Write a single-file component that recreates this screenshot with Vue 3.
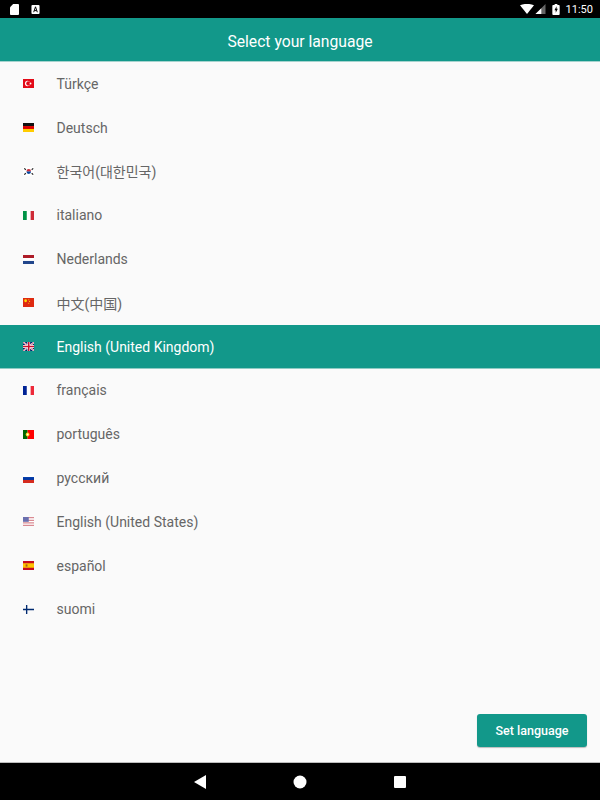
<script setup>
const languages = [
  { name: 'Türkçe', flag: 'tr' },
  { name: 'Deutsch', flag: 'de' },
  { name: '한국어(대한민국)', flag: 'kr' },
  { name: 'italiano', flag: 'it' },
  { name: 'Nederlands', flag: 'nl' },
  { name: '中文(中国)', flag: 'cn' },
  { name: 'English (United Kingdom)', flag: 'gb', selected: true },
  { name: 'français', flag: 'fr' },
  { name: 'português', flag: 'pt' },
  { name: 'русский', flag: 'ru' },
  { name: 'English (United States)', flag: 'us' },
  { name: 'español', flag: 'es' },
  { name: 'suomi', flag: 'fi' }
]
</script>

<template>
  <div class="screen">
    <div class="status-bar">
      <div class="status-left">
        <svg width="9" height="11" viewBox="0 0 10 12"><path d="M3.500 0H9a1 1 0 0 1 1 1v10a1 1 0 0 1-1 1H1a1 1 0 0 1-1-1V3.500z" fill="#fff"/></svg>
        <svg width="9" height="9" viewBox="0 0 9 10"><rect width="9" height="10" rx="1" fill="#fff"/><path d="M2.500 8 4.500 2l2 6M3.300 6.200h2.400" stroke="#000" stroke-width="1.100" fill="none"/></svg>
      </div>
      <div class="status-right">
        <svg width="14" height="10" viewBox="0 0 17 12"><path d="M0 1.500C5-.8 12-.8 17 1.500L8.500 12z" fill="#fff"/></svg>
        <svg width="11" height="10" viewBox="0 0 12 12"><path d="M12 0v12H0z" fill="#666"/><path d="M7 5v7H0z" fill="#fff"/></svg>
        <svg class="battery" width="8" height="11" viewBox="0 0 8 12"><path d="M2.500 0h3v1H7a1 1 0 0 1 1 1v9a1 1 0 0 1-1 1H1a1 1 0 0 1-1-1V2a1 1 0 0 1 1-1h1.500z" fill="#fff"/><path d="M4.600 2.500 2.300 6.800h1.400v2.700L6 5.300H4.600z" fill="#000"/></svg>
        <span class="clock">11:50</span>
      </div>
    </div>

    <header class="app-bar">Select your language</header>

    <main class="content">
      <ul class="language-list">
        <li
          v-for="lang in languages"
          :key="lang.flag"
          class="language-row"
          :class="{ selected: lang.selected }"
        >
          <svg class="flag" width="11.500" height="9" viewBox="0 0 11 8" preserveAspectRatio="none">
            <template v-if="lang.flag === 'tr'">
              <rect width="11" height="8" fill="#e30a17"/>
              <circle cx="4.300" cy="4" r="2.400" fill="#fff"/>
              <circle cx="5" cy="4" r="1.900" fill="#e30a17"/>
              <circle cx="7.200" cy="4" r="0.900" fill="#fff"/>
            </template>
            <template v-else-if="lang.flag === 'de'">
              <rect width="11" height="2.700" fill="#111"/>
              <rect y="2.700" width="11" height="2.700" fill="#d00"/>
              <rect y="5.300" width="11" height="2.700" fill="#fc0"/>
            </template>
            <template v-else-if="lang.flag === 'kr'">
              <rect width="11" height="8" fill="#fff"/>
              <path d="M3.300 4a2.200 2.200 0 0 1 4.400 0z" fill="#cd2e3a"/>
              <path d="M3.300 4a2.200 2.200 0 0 0 4.400 0z" fill="#0047a0"/>
              <path d="M1.200 1.200 2.700 2.500M9.800 1.200 8.300 2.500M1.200 6.800 2.700 5.500M9.800 6.800 8.300 5.500" stroke="#222" stroke-width="1.100"/>
            </template>
            <template v-else-if="lang.flag === 'it'">
              <rect width="3.700" height="8" fill="#009246"/>
              <rect x="3.700" width="3.600" height="8" fill="#fff"/>
              <rect x="7.300" width="3.700" height="8" fill="#ce2b37"/>
            </template>
            <template v-else-if="lang.flag === 'nl'">
              <rect width="11" height="2.700" fill="#ae1c28"/>
              <rect y="2.700" width="11" height="2.700" fill="#fff"/>
              <rect y="5.300" width="11" height="2.700" fill="#21468b"/>
            </template>
            <template v-else-if="lang.flag === 'cn'">
              <rect width="11" height="8" fill="#de2910"/>
              <circle cx="2.500" cy="2.500" r="1.300" fill="#ffde00"/>
              <circle cx="5.500" cy="1.500" r="0.500" fill="#ffde00"/>
              <circle cx="6.300" cy="3" r="0.500" fill="#ffde00"/>
              <circle cx="5.500" cy="4.700" r="0.500" fill="#ffde00"/>
            </template>
            <template v-else-if="lang.flag === 'gb'">
              <rect width="11" height="8" fill="#012169"/>
              <path d="M0 0 11 8M11 0 0 8" stroke="#fff" stroke-width="1.600"/>
              <path d="M0 0 11 8M11 0 0 8" stroke="#c8102e" stroke-width="0.500"/>
              <path d="M5.500 0v8M0 4h11" stroke="#fff" stroke-width="2.600"/>
              <path d="M5.500 0v8M0 4h11" stroke="#c8102e" stroke-width="1.400"/>
            </template>
            <template v-else-if="lang.flag === 'fr'">
              <rect width="3.700" height="8" fill="#002395"/>
              <rect x="3.700" width="3.600" height="8" fill="#fff"/>
              <rect x="7.300" width="3.700" height="8" fill="#ed2939"/>
            </template>
            <template v-else-if="lang.flag === 'pt'">
              <rect width="4.400" height="8" fill="#060"/>
              <rect x="4.400" width="6.600" height="8" fill="#f00"/>
              <circle cx="4.400" cy="4" r="1.800" fill="#fc0"/>
              <circle cx="4.400" cy="4" r="0.900" fill="#fff"/>
            </template>
            <template v-else-if="lang.flag === 'ru'">
              <rect width="11" height="2.700" fill="#fff"/>
              <rect y="2.700" width="11" height="2.700" fill="#0039a6"/>
              <rect y="5.300" width="11" height="2.700" fill="#d52b1e"/>
            </template>
            <template v-else-if="lang.flag === 'us'">
              <rect width="11" height="8" fill="#fff"/>
              <path d="M0 .6h11M0 2.900h11M0 5.200h11M0 7.400h11" stroke="#d98a92" stroke-width="1.100"/>
              <rect width="5.500" height="4.300" fill="#6a6fae"/>
            </template>
            <template v-else-if="lang.flag === 'es'">
              <rect width="11" height="8" fill="#c60b1e"/>
              <rect y="2" width="11" height="4" fill="#ffc400"/>
              <rect x="2.500" y="3" width="1.800" height="2" fill="#ad5a1e"/>
            </template>
            <template v-else>
              <path d="M3.500 0v8M0 4h11" stroke="#002a70" stroke-width="1.300"/>
            </template>
          </svg>
          <span class="language-name">{{ lang.name }}</span>
        </li>
      </ul>

      <div class="actions">
        <button class="set-button">Set language</button>
      </div>
    </main>

    <nav class="nav-bar">
      <svg width="12" height="14" viewBox="0 0 12 14"><path d="M12 0v14L0 7z" fill="#fff"/></svg>
      <svg width="14" height="14" viewBox="0 0 14 14"><circle cx="7" cy="7" r="6.500" fill="#fff"/></svg>
      <svg width="12" height="12" viewBox="0 0 12 12"><rect width="12" height="12" rx="1" fill="#fff"/></svg>
    </nav>
  </div>
</template>

<style>
html, body {
  margin: 0;
  background: #fafafa;
}
</style>

<style scoped>
.screen {
  width: 600px;
  height: 800px;
  display: flex;
  flex-direction: column;
  overflow: hidden;
  background: #fafafa;
  font-family: Roboto, "Noto Sans CJK KR", "Noto Sans CJK SC", sans-serif;
}

.status-bar {
  height: 18px;
  flex-shrink: 0;
  background: #000;
  display: flex;
  align-items: center;
  justify-content: space-between;
  padding: 0 7px 0 10px;
}

.status-left {
  display: flex;
  align-items: center;
  gap: 12px;
}

.status-right {
  display: flex;
  align-items: center;
}

.status-right svg + svg {
  margin-left: 1px;
}

.status-right .battery {
  margin-left: 6px;
}

.clock {
  margin-left: 6px;
  color: #fff;
  font-size: 11px;
}

.app-bar {
  height: 44px;
  flex-shrink: 0;
  background: #12988a;
  border-bottom: 1px solid #a5d3ce;
  box-sizing: border-box;
  padding-top: 4px;
  color: #fff;
  font-size: 15.700px;
  display: flex;
  align-items: center;
  justify-content: center;
}

.content {
  flex: 1;
  display: flex;
  flex-direction: column;
  justify-content: space-between;
  min-height: 0;
}

.language-list {
  list-style: none;
  margin: 0;
  padding: 0;
}

.language-row {
  height: 43.800px;
  display: flex;
  align-items: center;
  padding-left: 22.500px;
  color: #666;
  font-size: 14px;
}

.language-row.selected {
  background: #12988a;
  box-shadow: inset 0 -1px 0 #8fcbc4;
  color: #fff;
}

.flag {
  flex-shrink: 0;
  margin-right: 22.500px;
  filter: blur(0.3px);
}

.actions {
  display: flex;
  justify-content: flex-end;
  padding: 0 13px 15px 0;
}

.set-button {
  width: 110px;
  height: 33px;
  border: none;
  border-radius: 3px;
  background: #12988a;
  color: #fff;
  font-family: inherit;
  font-size: 12.500px;
  font-weight: 500;
  box-shadow: 0 1px 1px rgba(0, 0, 0, 0.25);
}

.nav-bar {
  height: 38px;
  flex-shrink: 0;
  box-sizing: border-box;
  border-top: 1px solid #bdbdbd;
  background: #000;
  display: flex;
  align-items: center;
  justify-content: center;
  gap: 87px;
}
</style>
